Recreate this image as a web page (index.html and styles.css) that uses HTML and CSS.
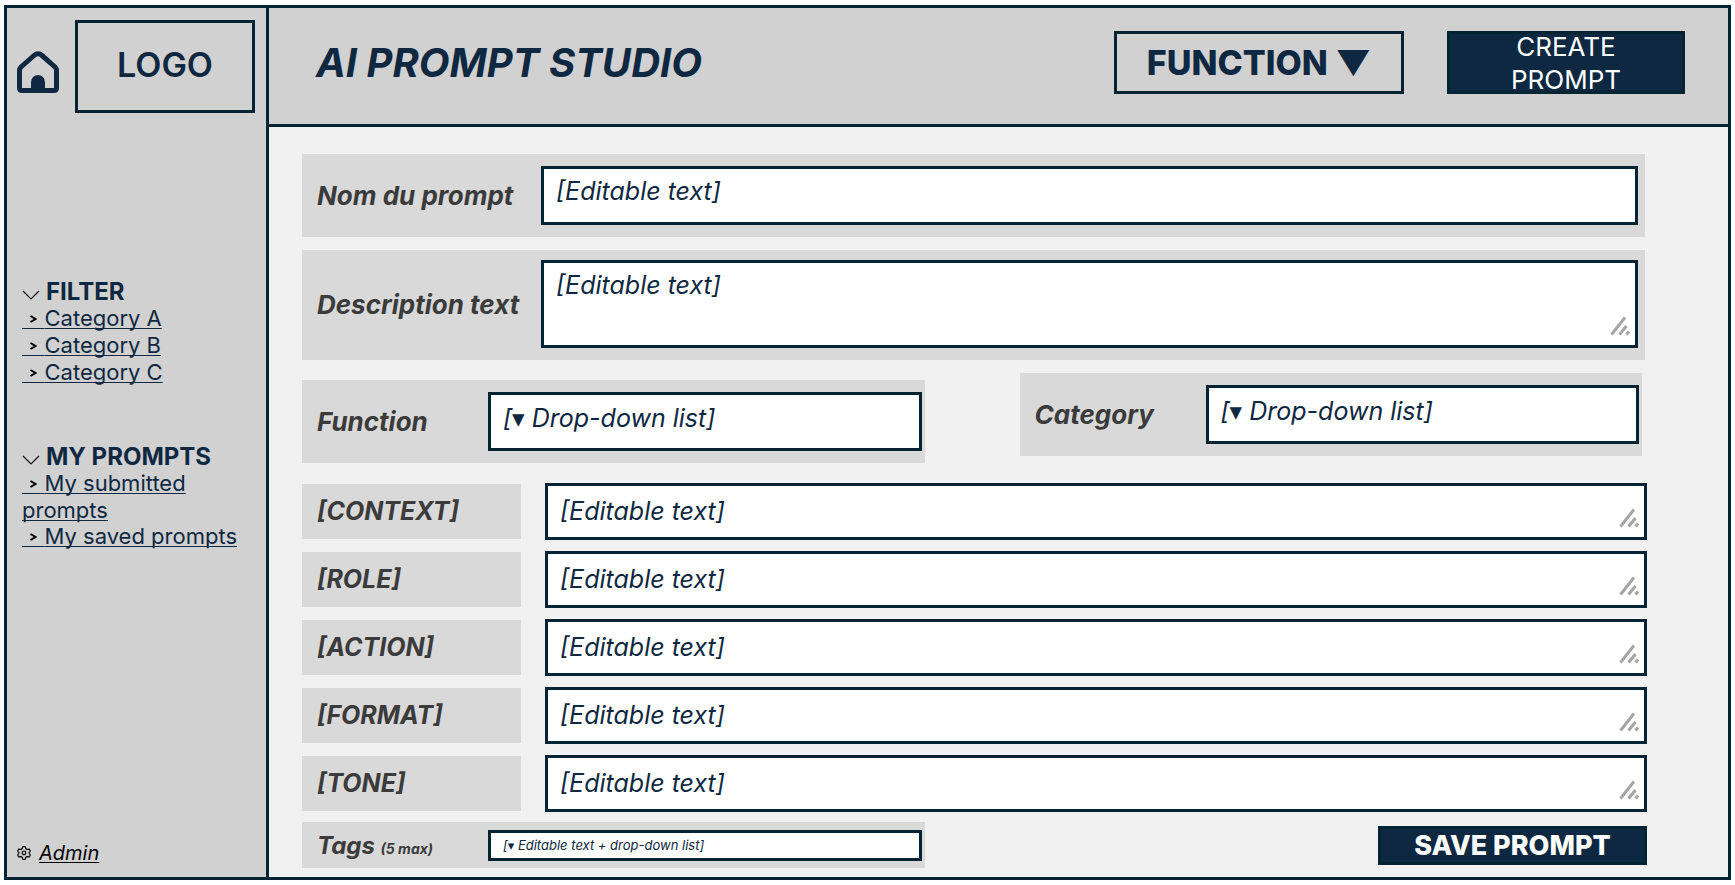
FILE: index.html
```html
<!DOCTYPE html>
<html lang="en">
<head>
<meta charset="utf-8">
<title>AI Prompt Studio</title>
<link rel="stylesheet" href="styles.css">
</head>
<body>
<svg class="defs" width="0" height="0" aria-hidden="true">
  <symbol id="grip" viewBox="0 0 20 20">
    <path d="M1.500 18.500 15 1.500M9.500 18.500l7-8.500M16.500 18.500l2.500-3" fill="none" stroke="#a6a6a6" stroke-width="3"/>
  </symbol>
  <symbol id="chevron" viewBox="0 0 18 10">
    <path d="M1 1l8 8 8-8" fill="none" stroke="#111" stroke-width="1.2"/>
  </symbol>
  <symbol id="arrow" viewBox="0 0 7 8">
    <path d="M.5 1l5 3-5 3" fill="none" stroke="#000" stroke-width="2"/>
  </symbol>
</svg>
<div class="app">
  <aside class="sidebar">
    <div class="brand">
      <a class="home" href="#" aria-label="Home">
        <svg width="42" height="42" viewBox="0 0 42 42">
          <path d="M2.500 19.500Q2.500 17.500 4 16L17 4.500Q21 1 25 4.500L38 16Q39.500 17.500 39.500 19.500V37Q39.500 39.500 37 39.500H5Q2.500 39.500 2.500 37Z" fill="none" stroke="#0e2841" stroke-width="5"/>
          <path d="M14 39V31a7 7 0 0 1 14 0V39Z" fill="#0e2841"/>
        </svg>
      </a>
      <div class="logo">LOGO</div>
    </div>
    <nav class="menu">
      <section>
        <h2><svg class="chevron" width="18" height="10"><use href="#chevron"/></svg>FILTER</h2>
        <ul>
          <li><a href="#"><span class="arrow">&nbsp;&nbsp;&nbsp;&nbsp;<svg><use href="#arrow"/></svg></span>Category A</a></li>
          <li><a href="#"><span class="arrow">&nbsp;&nbsp;&nbsp;&nbsp;<svg><use href="#arrow"/></svg></span>Category B</a></li>
          <li><a href="#"><span class="arrow">&nbsp;&nbsp;&nbsp;&nbsp;<svg><use href="#arrow"/></svg></span>Category C</a></li>
        </ul>
      </section>
      <section>
        <h2><svg class="chevron" width="18" height="10"><use href="#chevron"/></svg>MY PROMPTS</h2>
        <ul>
          <li><a href="#"><span class="arrow">&nbsp;&nbsp;&nbsp;&nbsp;<svg><use href="#arrow"/></svg></span>My submitted prompts</a></li>
          <li><a href="#"><span class="arrow">&nbsp;&nbsp;&nbsp;&nbsp;<svg><use href="#arrow"/></svg></span>My saved prompts</a></li>
        </ul>
      </section>
    </nav>
    <div class="admin">
      <svg width="14" height="14" viewBox="0 0 14 14" fill="none" stroke="#111" stroke-width="1.300">
        <path d="M5.900 .700h2.200l.8 2.100 1.200.7 2.200-.4 1 1.900L12 7l1.300 2-1 1.900-2.200-.4-1.200.7-.8 2.100H5.900l-.8-2.100-1.200-.7-2.200.4-1-1.900L2 7 .7 5l1-1.900 2.200.4 1.200-.7z"/>
        <circle cx="7" cy="7" r="1.800"/>
      </svg>
      <a href="#">Admin</a>
    </div>
  </aside>

  <header class="topbar">
    <h1>AI PROMPT STUDIO</h1>
    <select class="function-menu" aria-label="Function"><option>FUNCTION ▼</option></select>
    <button class="create" type="button">CREATE PROMPT</button>
  </header>

  <main>
    <form>
      <div class="panel wide">
        <label for="name">Nom du prompt</label>
        <input class="box" id="name" type="text" value="[Editable text]">
      </div>
      <div class="panel wide tall">
        <label for="desc">Description text</label>
        <div class="area">
          <textarea class="box" id="desc">[Editable text]</textarea>
          <svg class="grip"><use href="#grip"/></svg>
        </div>
      </div>
      <div class="pair">
        <div class="panel half lower">
          <label for="function">Function</label>
          <select class="box" id="function"><option>[▾ Drop-down list]</option></select>
        </div>
        <div class="panel half">
          <label for="category">Category</label>
          <select class="box" id="category"><option>[▾ Drop-down list]</option></select>
        </div>
      </div>
      <div class="rows">
        <div class="row">
          <label for="context">[CONTEXT]</label>
          <div class="area"><textarea class="box" id="context">[Editable text]</textarea><svg class="grip"><use href="#grip"/></svg></div>
        </div>
        <div class="row">
          <label for="role">[ROLE]</label>
          <div class="area"><textarea class="box" id="role">[Editable text]</textarea><svg class="grip"><use href="#grip"/></svg></div>
        </div>
        <div class="row">
          <label for="action">[ACTION]</label>
          <div class="area"><textarea class="box" id="action">[Editable text]</textarea><svg class="grip"><use href="#grip"/></svg></div>
        </div>
        <div class="row">
          <label for="format">[FORMAT]</label>
          <div class="area"><textarea class="box" id="format">[Editable text]</textarea><svg class="grip"><use href="#grip"/></svg></div>
        </div>
        <div class="row">
          <label for="tone">[TONE]</label>
          <div class="area"><textarea class="box" id="tone">[Editable text]</textarea><svg class="grip"><use href="#grip"/></svg></div>
        </div>
      </div>
      <div class="footer">
        <div class="panel half tags">
          <label for="tags">Tags <small>(5 max)</small></label>
          <input class="box" id="tags" type="text" value="[▾ Editable text + drop-down list]">
        </div>
        <button class="save" type="submit">SAVE PROMPT</button>
      </div>
    </form>
  </main>
</div>
</body>
</html>
```
FILE: styles.css
```css
:root {
  --navy: #0e2841;
  --line: #042433;
  --bar: #d1d1d1;
  --panel: #d9d9d9;
  --page: #f1f1f1;
}
* { box-sizing: border-box; }
body {
  margin: 0;
  padding: 5px 4px;
  background: #fff;
  color: var(--navy);
  font-family: Inter, "Liberation Sans", "DejaVu Sans", sans-serif;
}
h1, h2, ul { margin: 0; padding: 0; }
ul { list-style: none; }
input, select, textarea, button {
  margin: 0;
  font-family: inherit;
  color: inherit;
  border-radius: 0;
  appearance: none;
}
.defs { position: absolute; }

.app {
  display: grid;
  grid-template-columns: 262px 1fr;
  grid-template-rows: 119px 1fr;
  min-height: calc(100vh - 10px);
  border: 3px solid var(--line);
}

/* Sidebar */
.sidebar {
  grid-row: 1 / 3;
  display: flex;
  flex-direction: column;
  background: var(--bar);
  border-right: 3px solid var(--line);
}
.brand { display: flex; gap: 16px; padding: 12px 11px 0 10px; }
.home { padding-top: 31px; }
.home svg { display: block; }
.logo {
  flex: 1;
  height: 93px;
  border: 3px solid var(--line);
  display: grid;
  place-items: center;
  padding-bottom: 4px;
  font-size: 34px;
  font-weight: 600;
}
.menu {
  display: flex;
  flex-direction: column;
  gap: 57px;
  padding: 165px 8px 0 15px;
  font-size: 22px;
}
.menu h2 { font-size: 24px; line-height: 27px; font-weight: 700; }
.menu li { line-height: 26px; }
.chevron { margin-right: 6px; vertical-align: 0; }
.menu a, .admin a {
  color: inherit;
  text-decoration: underline 1px;
  text-underline-offset: 2px;
  text-decoration-skip-ink: none;
}
.arrow { position: relative; font-size: 20px; }
.arrow svg { position: absolute; left: 8px; top: 8px; width: 7px; height: 8px; }
.admin {
  margin-top: auto;
  display: flex;
  align-items: center;
  gap: 8px;
  padding: 0 11px 12px 10px;
  color: #000;
  font-size: 20px;
  line-height: 24px;
  font-style: italic;
}

/* Top bar */
.topbar {
  display: flex;
  align-items: flex-start;
  padding: 23px 43px 0 47px;
  background: var(--bar);
  border-bottom: 3px solid var(--line);
}
h1 { flex: 1; font-size: 40px; line-height: 63px; font-weight: 700; font-style: italic; }
.function-menu {
  width: 290px;
  height: 63px;
  margin-right: 43px;
  border: 3px solid var(--line);
  background: transparent;
  font-size: 34px;
  font-weight: 800;
  text-align: center;
  text-align-last: center;
}
.create, .save {
  border: 3px solid var(--line);
  background: var(--navy);
  color: #fff;
}
.create {
  width: 238px;
  height: 63px;
  padding: 0 40px;
  font-size: 26px;
  line-height: 33px;
  display: flex;
  align-items: center;
  justify-content: center;
}

/* Form */
main { background: var(--page); padding: 27px 81px 9px 33px; }
label {
  color: #3b3b3b;
  font-size: 26px;
  font-weight: 700;
  font-style: italic;
  padding-left: 15px;
  white-space: nowrap;
}
.box {
  display: block;
  width: 100%;
  height: 59px;
  padding: 0 12px 9px;
  border: 3px solid var(--line);
  background: #fff;
  font-size: 25px;
  font-style: italic;
}
select.box { padding-bottom: 7px; }
.panel {
  display: grid;
  align-items: center;
  background: var(--panel);
  padding: 12px 3px 12px 0;
}
.wide { grid-template-columns: 239px 1fr; margin: 0 2px 13px 0; padding-right: 7px; }
.tall { padding-top: 10px; }
.half { grid-template-columns: 186px 1fr; }
.pair {
  display: grid;
  grid-template-columns: 1fr 1fr;
  align-items: start;
  gap: 95px;
  margin: 0 5px 20px 0;
}
.lower { margin-top: 7px; }
.area { position: relative; }
textarea.box { resize: none; overflow: hidden; padding: 7px 12px; line-height: 30px; }
.tall .box { height: 88px; }
.grip { position: absolute; right: 8px; bottom: 12px; width: 20px; height: 20px; }

.rows { display: grid; gap: 11px; }
.row { display: grid; grid-template-columns: 219px 1fr; gap: 24px; align-items: center; }
.row label { background: var(--panel); font-size: 25px; line-height: 55px; }
.row .box { height: 57px; padding-top: 10px; }

.footer {
  display: grid;
  grid-template-columns: 623px 269px;
  justify-content: space-between;
  align-items: center;
  margin-top: 10px;
}
.tags { height: 46px; padding-top: 0; padding-bottom: 0; }
.tags label { font-size: 24px; }
.tags .box { height: 31px; padding: 0 12px; font-size: 13px; }
small { font-size: 14px; }
.save { height: 39px; padding: 0; font-size: 27px; line-height: 33px; font-weight: 800; }
```
